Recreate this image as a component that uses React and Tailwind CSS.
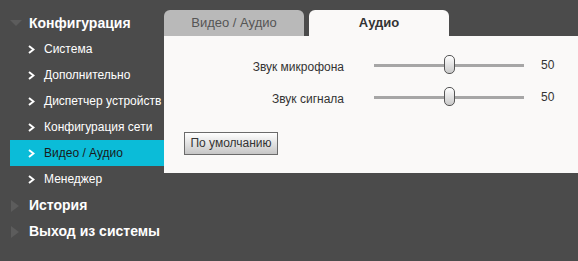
const Chevron = () => (
  <svg width="7" height="9" viewBox="0 0 7 9" className="shrink-0">
    <path d="M1 1 L5.5 4.5 L1 8" fill="none" stroke="#ffffff" strokeWidth="2" />
  </svg>
);

const Slider = ({ label, value }) => (
  <div className="flex items-center h-[20px]">
    <div className="w-[180px] pt-[4px] text-right text-[12px] text-[#333]">{label}</div>
    <div className="relative ml-[30px] w-[150px] h-[20px] flex items-center">
      <div className="w-full h-[3px] bg-[#a6a6a6]"></div>
      <div className="absolute left-[70px] top-[0px] w-[11px] h-[19px] rounded-[5px] border border-[#555] bg-gradient-to-b from-white to-[#c9c9c9]"></div>
    </div>
    <div className="ml-[17px] text-[12px] text-[#333]">{value}</div>
  </div>
);

const subItems = ['Система', 'Дополнительно', 'Диспетчер устройств', 'Конфигурация сети', 'Видео / Аудио', 'Менеджер'];

export default function App() {
  return (
    <div className="w-[578px] h-[261px] bg-[#4b4b4b] flex overflow-hidden font-['Liberation_Sans',Arial,sans-serif]">
      {/* Sidebar */}
      <div className="w-[164px] shrink-0 pt-[10px]">
        <div className="flex items-center h-[26px] pl-[10px]">
          <svg width="12" height="7" viewBox="0 0 12 7"><path d="M0 0 H12 L6 6 Z" fill="#5c5c5c" /></svg>
          <span className="ml-[7px] text-[14px] font-bold text-white">Конфигурация</span>
        </div>
        {subItems.map((item) => {
          const active = item === 'Видео / Аудио';
          return (
            <div
              key={item}
              className={`flex items-center h-[26px] ml-[10px] pl-[18px] whitespace-nowrap ${active ? 'bg-[#0bbcd8]' : ''}`}
            >
              <Chevron />
              <span className={`ml-[9px] text-[12px] ${active ? 'text-[#1a1a1a]' : 'text-white'}`}>{item}</span>
            </div>
          );
        })}
        {['История', 'Выход из системы'].map((item) => (
          <div key={item} className="flex items-center h-[25px] pl-[11px] mt-[1px]">
            <svg width="8" height="12" viewBox="0 0 8 12"><path d="M0 0 L8 6 L0 12 Z" fill="#5c5c5c" /></svg>
            <span className="ml-[10px] text-[14px] font-bold text-white whitespace-nowrap">{item}</span>
          </div>
        ))}
      </div>

      {/* Content */}
      <div className="flex-1 pt-[10px]">
        <div className="flex gap-[5px] h-[26px]">
          <div className="w-[140px] rounded-t-[6px] bg-[#b9b9b9] flex items-center justify-center text-[13px] text-[#555]">
            Видео / Аудио
          </div>
          <div className="w-[140px] rounded-t-[6px] bg-[#faf9f8] flex items-center justify-center text-[13px] font-bold text-[#333]">
            Аудио
          </div>
        </div>
        <div className="h-[137px] bg-[#faf9f8] pt-[19px]">
          <div className="flex flex-col gap-[12px]">
            <Slider label="Звук микрофона" value="50" />
            <Slider label="Звук сигнала" value="50" />
          </div>
          <div className="pl-[20px] mt-[23px]">
            <button className="w-[94px] h-[23px] border border-[#6b6b6b] bg-gradient-to-b from-white to-[#c6c6c6] text-[12px] text-[#333]">
              По умолчанию
            </button>
          </div>
        </div>
      </div>
    </div>
  );
}
